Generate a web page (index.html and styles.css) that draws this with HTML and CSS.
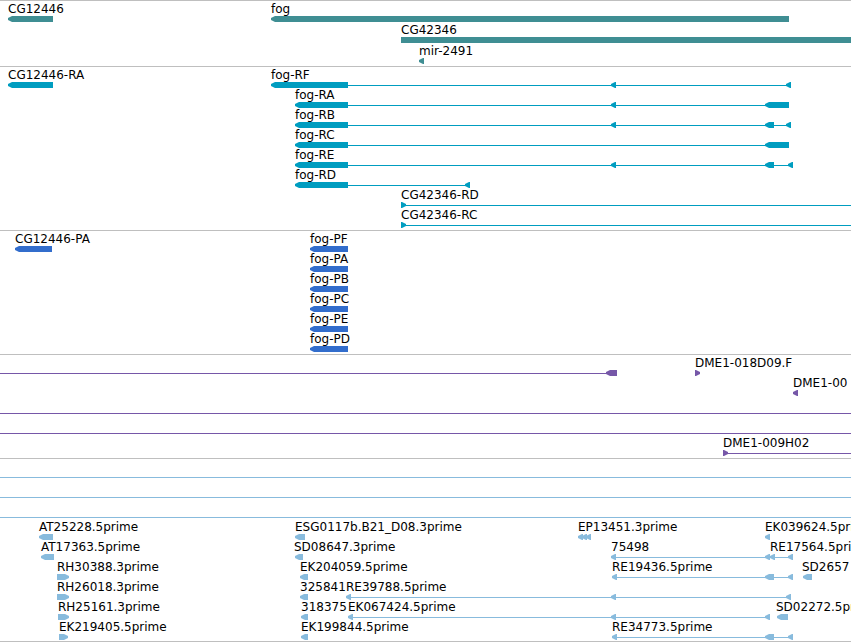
FILE: index.html
```
<!DOCTYPE html>
<html lang="en">
<head>
    <meta charset="UTF-8">
    <meta name="viewport" content="width=device-width, initial-scale=1.0">
    <title>Genome Tracks</title>
    <link rel="stylesheet" href="styles.css">
</head>
<body>
    <main class="browser">
        <section class="track gene" id="genes"></section>
        <section class="track rna" id="transcripts"></section>
        <section class="track protein" id="proteins"></section>
        <section class="track insertion" id="insertions"></section>
        <section class="track est" id="ests"></section>
    </main>

    <script src="app.js"></script>
</body>
</html>
```

FILE: styles.css
```
* {
    margin: 0;
    padding: 0;
    box-sizing: border-box;
}

body {
    font-family: 'DejaVu Sans', sans-serif;
    font-size: 12px;
    background: #fff;
    color: #000;
}

.browser {
    width: 100%;
    overflow: hidden;
    border-bottom: 1px solid #bfbfbf;
}

/* Tracks */
.track {
    border-top: 1px solid #bfbfbf;
    padding: 1px 0 2px;
}

.track.gene {
    color: #3f8e93;
    padding-top: 0;
}

.track.rna {
    color: #009dc0;
}

.track.protein {
    color: #326dcc;
}

.track.insertion {
    color: #7657a8;
}

.track.est {
    color: #88bbdd;
    padding-bottom: 1px;
}

/* Rows: labels on top, features under them */
.labels {
    position: relative;
    height: 14px;
}

.gene .labels {
    height: 15px;
}

.label {
    position: absolute;
    bottom: 0;
    line-height: 14px;
    color: #000;
    white-space: nowrap;
}

.features {
    display: block;
    width: 100%;
    height: 6px;
    fill: currentColor;
}

.intron {
    stroke: currentColor;
    stroke-width: 1px;
    shape-rendering: crispEdges;
}
```

FILE: app.js
```
// labels: [x, text]
// lines:  [start, end], an end of null runs past the right edge
// left / right: exons [start, end] with the arrow on that side
// flat: exons without an arrow in view
const tracks = {
    genes: [
        { labels: [[8, 'CG12446'], [271, 'fog']], left: [[8, 53], [271, 789]] },
        { labels: [[401, 'CG42346']], flat: [[401, null]] },
        { labels: [[419, 'mir-2491']], left: [[419, 424]] }
    ],
    transcripts: [
        { labels: [[8, 'CG12446-RA'], [271, 'fog-RF']], lines: [[348, 787]], left: [[8, 53], [271, 348], [611, 616], [786, 791]] },
        { labels: [[295, 'fog-RA']], lines: [[348, 766]], left: [[295, 348], [611, 616], [765, 789]] },
        { labels: [[295, 'fog-RB']], lines: [[348, 787]], left: [[295, 348], [611, 616], [765, 774], [786, 791]] },
        { labels: [[295, 'fog-RC']], lines: [[348, 766]], left: [[295, 348], [765, 789]] },
        { labels: [[295, 'fog-RE']], lines: [[348, 789]], left: [[295, 348], [611, 616], [765, 774], [788, 793]] },
        { labels: [[295, 'fog-RD']], lines: [[348, 466]], left: [[295, 348], [465, 470]] },
        { labels: [[401, 'CG42346-RD']], lines: [[401, null]], right: [[401, 406]] },
        { labels: [[401, 'CG42346-RC']], lines: [[401, null]], right: [[401, 406]] }
    ],
    proteins: [
        { labels: [[15, 'CG12446-PA'], [310, 'fog-PF']], left: [[15, 52], [310, 348]] },
        { labels: [[310, 'fog-PA']], left: [[310, 348]] },
        { labels: [[310, 'fog-PB']], left: [[310, 348]] },
        { labels: [[310, 'fog-PC']], left: [[310, 348]] },
        { labels: [[310, 'fog-PE']], left: [[310, 348]] },
        { labels: [[310, 'fog-PD']], left: [[310, 348]] }
    ],
    insertions: [
        { labels: [[695, 'DME1-018D09.F']], lines: [[0, 607]], left: [[606, 617]], right: [[695, 700]] },
        { labels: [[793, 'DME1-00']], left: [[793, 798]] },
        { lines: [[0, null]] },
        { lines: [[0, null]] },
        { labels: [[723, 'DME1-009H02']], lines: [[723, null]], right: [[723, 728]] }
    ],
    ests: [
        { lines: [[0, null]] },
        { lines: [[0, null]] },
        { lines: [[0, null]] },
        {
            labels: [[39, 'AT25228.5prime'], [295, 'ESG0117b.B21_D08.3prime'], [578, 'EP13451.3prime'], [765, 'EK039624.5prime']],
            left: [[39, 53], [295, 305], [578, 583], [582, 587], [586, 591], [765, 770]]
        },
        {
            labels: [[41, 'AT17363.5prime'], [294, 'SD08647.3prime'], [611, '75498'], [770, 'RE17564.5prime']],
            lines: [[612, 790]],
            left: [[41, 54], [295, 303], [611, 616], [765, 770], [770, 775], [788, 793]]
        },
        {
            labels: [[57, 'RH30388.3prime'], [300, 'EK204059.5prime'], [612, 'RE19436.5prime'], [802, 'SD2657']],
            lines: [[613, 790]],
            left: [[300, 308], [612, 617], [765, 774], [788, 793], [803, 812]],
            right: [[57, 69]]
        },
        {
            labels: [[57, 'RH26018.3prime'], [300, '325841'], [346, 'RE39788.5prime']],
            lines: [[347, 788]],
            left: [[300, 308], [346, 351], [611, 616], [786, 791]],
            right: [[57, 69]]
        },
        {
            labels: [[58, 'RH25161.3prime'], [301, '318375'], [348, 'EK067424.5prime'], [776, 'SD02272.5prime']],
            lines: [[349, 767]],
            left: [[301, 308], [348, 353], [611, 616], [765, 770], [777, 788]],
            right: [[58, 69]]
        },
        {
            labels: [[59, 'EK219405.5prime'], [301, 'EK199844.5prime'], [612, 'RE34773.5prime']],
            lines: [[613, 790]],
            left: [[301, 308], [612, 617], [765, 774], [788, 793]],
            right: [[59, 68]]
        }
    ]
};

const HEAD = 4;

// tip is the pointed end of the exon, neck is where it reaches full height
function exon(tip, neck, end) {
    return `<polygon points="${tip},2 ${neck},0 ${end},0 ${end},6 ${neck},6 ${tip},4"/>`;
}

function drawFeatures(row) {
    let shapes = '';
    (row.lines || []).forEach(([a, b]) => {
        shapes += `<line class="intron" x1="${a}" x2="${b === null ? '100%' : b}" y1="3.5" y2="3.5"/>`;
    });
    (row.flat || []).forEach(([a]) => {
        shapes += `<rect x="${a}" width="100%" height="6"/>`;
    });
    (row.left || []).forEach(([a, b]) => {
        shapes += exon(a, a + HEAD, b);
    });
    (row.right || []).forEach(([a, b]) => {
        shapes += exon(b, b - HEAD, a);
    });
    return `<svg class="features">${shapes}</svg>`;
}

function drawLabels(row) {
    const labels = (row.labels || []).map(([x, text]) =>
        `<span class="label" style="left: ${x}px">${text}</span>`);
    return `<div class="labels">${labels.join('')}</div>`;
}

Object.keys(tracks).forEach(id => {
    document.getElementById(id).innerHTML = tracks[id]
        .map(row => `<div class="row">${drawLabels(row)}${drawFeatures(row)}</div>`)
        .join('');
});
```
